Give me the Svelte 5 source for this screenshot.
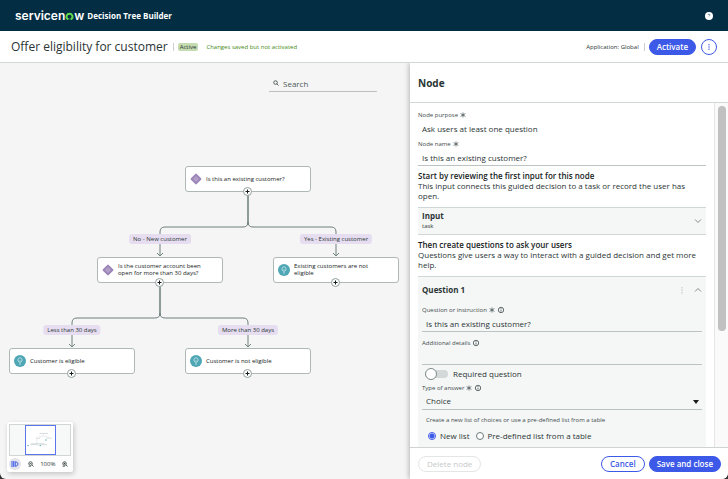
<script>
  let nodeName = $state('Is this an existing customer?');
  let question = $state('Is this an existing customer?');
  let details = $state('');
  let required = $state(false);
  let answerType = $state('Choice');
  let listSource = $state('new');
  let search = $state('');

  const nodes = [
    { x: 185, y: 103, kind: 'question', text: 'Is this an existing customer?' },
    { x: 97, y: 194, kind: 'question', text: 'Is the customer account been open for more than 30 days?' },
    { x: 273, y: 194, kind: 'result', text: 'Existing customers are not eligible' },
    { x: 9, y: 285, kind: 'result', text: 'Customer is eligible' },
    { x: 185, y: 285, kind: 'result', text: 'Customer is not eligible' }
  ];

  const branches = [
    { x: 160, y: 176, text: 'No - New customer' },
    { x: 336, y: 176, text: 'Yes - Existing customer' },
    { x: 72, y: 267, text: 'Less than 30 days' },
    { x: 248, y: 267, text: 'More than 30 days' }
  ];

  const forks = [
    { x: 248, y: 129 },
    { x: 160, y: 220 }
  ];
</script>

{#snippet star()}
  <svg class="star" viewBox="0 0 6 6" aria-hidden="true">
    <path d="M3 .5v5M.6 1.6l4.8 2.8M.6 4.4l4.8-2.8" />
  </svg>
{/snippet}

{#snippet info()}
  <svg class="info" viewBox="0 0 8 8" aria-hidden="true">
    <circle cx="4" cy="4" r="2.7" />
    <path d="M4 3.6v2M4 2.2v.8" />
  </svg>
{/snippet}

{#snippet magnifier(sign)}
  <svg class="magnifier" viewBox="0 0 8 8" aria-hidden="true">
    <circle cx="3.4" cy="3.4" r="2.4" />
    <path d="M5.2 5.2l2.2 2.2" />
    {#if sign}<path d="M2.2 3.4h2.4M.8 7h3" />{/if}
    {#if sign === '+'}<path d="M3.4 2.2v2.4" />{/if}
  </svg>
{/snippet}

<div class="app">
  <header class="topbar">
    <span class="logo">servicen<svg viewBox="0 0 16 16" aria-label="o"><path d="M8 1.5a7 7 0 0 0-5 12c.7.8 1.6.8 2.4.2 1.6-1.1 3.6-1.1 5.2 0 .8.6 1.7.6 2.4-.2a7 7 0 0 0-5-12zm0 10.6a3.6 3.6 0 1 1 0-7.2 3.6 3.6 0 0 1 0 7.2z" /></svg>w</span>
    <span class="product">Decision Tree Builder</span>
    <button class="help" aria-label="Help">
      <svg viewBox="0 0 8 8"><circle cx="4" cy="4" r="4" /><path d="M3 3c0-1.2 2-1.2 2 0 0 .7-1 .7-1 1.4" /></svg>
    </button>
  </header>

  <div class="titlebar">
    <h1>Offer eligibility for customer</h1>
    <span class="rule"></span>
    <span class="badge">Active</span>
    <span class="saved">Changes saved but not activated</span>
    <span class="scope">Application: Global</span>
    <span class="rule"></span>
    <button class="pill primary">Activate</button>
    <button class="more" aria-label="More actions">
      <svg viewBox="0 0 6 10"><path d="M3 2v1.5M3 4.25v1.5M3 6.5v1.5" /></svg>
    </button>
  </div>

  <div class="workspace">
    <main class="canvas">
      <label class="search">
        {@render magnifier()}
        <input type="text" placeholder="Search" aria-label="Search" bind:value={search} />
      </label>

      <svg class="links" width="410" height="320" aria-hidden="true">
        {#each forks as { x, y }}
          <path class="trunk" d="M{x} {y}v33" />
          <path d="M{x} {y + 30}q0 5-5 5H{x - 83}q-5 0-5 5v24M{x} {y + 30}q0 5 5 5H{x + 83}q5 0 5 5v24" />
          <path d="M{x - 91} {y + 61}l3 3 3-3M{x + 85} {y + 61}l3 3 3-3" />
        {/each}
      </svg>

      {#each branches as branch}
        <span class="branch" style="left: {branch.x}px; top: {branch.y}px">{branch.text}</span>
      {/each}

      {#each nodes as node}
        <div class="node" style="left: {node.x}px; top: {node.y}px">
          {#if node.kind === 'question'}
            <svg viewBox="0 0 12 12" aria-hidden="true">
              <rect x="1.9" y="1.9" width="8.2" height="8.2" rx="1" transform="rotate(45 6 6)" fill="#9c86b8" />
              <path d="M6 3.6v1.2M6 7.2v1.2M3.6 6h1.2M7.2 6h1.2M4.8 4.8l.5.5M6.7 6.7l.5.5M7.2 4.8l-.5.5M5.3 6.7l-.5.5" stroke="#e6dcf0" stroke-width=".8" />
            </svg>
          {:else}
            <svg viewBox="0 0 12 12" aria-hidden="true">
              <circle cx="6" cy="6" r="6" fill="#4fa6b5" />
              <path d="M5.2 7.2C3.3 6 3.8 2.8 6 2.8s2.7 3.2.8 4.4M6 5.4v4.4" stroke="#d5f0f3" stroke-width=".8" />
            </svg>
          {/if}
          <span>{node.text}</span>
          <button class="add" aria-label="Add after {node.text}">
            <svg viewBox="0 0 9 9"><path d="M4.5 2.5v4M2.5 4.5h4" /></svg>
          </button>
        </div>
      {/each}

      <div class="minimap">
        <div class="overview">
          <svg viewBox="0 0 30 30" aria-label="Tree overview">
            <path d="M14 8h9M10 13h5M21 13h6M5 19h14M4 20h9M15 20h7" stroke="#d3d8d8" />
            <path d="M18 8v3M11 13v6M13 11h11" stroke="#d5d9d9" stroke-width=".5" />
            <path d="M20 15h1.5M1 21h1.5M14 21h1.5" stroke="#3fa5ab" />
          </svg>
        </div>
        <div class="zoom">
          <button class="toggle" aria-label="Toggle overview">
            <svg viewBox="0 0 8 8"><path d="M1 1v6M2.7 1v6M4.2 1.5v5M4.2 2h1.5l1.5 2-1.5 2H4.2" /></svg>
          </button>
          <button aria-label="Zoom out">{@render magnifier('-')}</button>
          <span>100%</span>
          <button aria-label="Zoom in">{@render magnifier('+')}</button>
        </div>
      </div>
    </main>

    <aside class="panel">
      <h2>Node</h2>

      <div class="scroll">
        <div class="form">
          <div class="label">Node purpose {@render star()}</div>
          <div class="value">Ask users at least one question</div>

          <label class="label" for="node-name">Node name {@render star()}</label>
          <input class="field" id="node-name" type="text" bind:value={nodeName} />

          <div class="intro">
            <h3>Start by reviewing the first input for this node</h3>
            <p>This input connects this guided decision to a task or record the user has open.</p>
          </div>

          <button class="card input-card">
            <span><b>Input</b><small>task</small></span>
            <svg class="chevron" viewBox="0 0 8 8"><path d="M1 2.5l3 3 3-3" /></svg>
          </button>

          <div class="intro">
            <h3>Then create questions to ask your users</h3>
            <p>Questions give users a way to interact with a guided decision and get more help.</p>
          </div>

          <section class="card question">
            <div class="question-head">
              <b>Question 1</b>
              <button aria-label="Question actions">
                <svg class="dots" viewBox="0 0 8 8"><path d="M4 1v1.5M4 3.5v1.5M4 6v1.5" /></svg>
              </button>
              <button aria-label="Collapse question">
                <svg class="chevron" viewBox="0 0 8 8"><path d="M1 5.5l3-3 3 3" /></svg>
              </button>
            </div>

            <label class="label" for="question">Question or instruction {@render star()} {@render info()}</label>
            <input class="field" id="question" type="text" bind:value={question} />

            <label class="label details" for="details">Additional details {@render info()}</label>
            <input class="field" id="details" type="text" bind:value={details} />

            <label class="switch">
              <input type="checkbox" role="switch" bind:checked={required} />
              Required question
            </label>

            <label class="label" for="answer">Type of answer {@render star()} {@render info()}</label>
            <div class="select">
              <select class="field" id="answer" bind:value={answerType}>
                <option>Choice</option>
                <option>Text</option>
              </select>
            </div>

            <fieldset>
              <legend>Create a new list of choices or use a pre-defined list from a table</legend>
              <label><input type="radio" value="new" bind:group={listSource} />New list</label>
              <label><input type="radio" value="table" bind:group={listSource} />Pre-defined list from a table</label>
            </fieldset>
          </section>
        </div>
        <div class="track"><div class="thumb"></div></div>
      </div>

      <footer>
        <button class="pill" disabled>Delete node</button>
        <button class="pill secondary">Cancel</button>
        <button class="pill primary">Save and close</button>
      </footer>
    </aside>
  </div>
</div>

<style>
  :global(body) {
    background: #333;
  }

  .app {
    display: flex;
    flex-direction: column;
    height: 100vh;
    overflow: hidden;
    border-radius: 0 0 6px 6px;
    background: #f5f5f5;
    color: #2b3535;
    font: 8px/10px "Open Sans", "Noto Sans", sans-serif;
  }

  .app *,
  .app *::before {
    box-sizing: border-box;
  }

  h1, h2, h3, p {
    margin: 0;
  }

  button, input, select {
    margin: 0;
    padding: 0;
    border: 0;
    background: none;
    color: inherit;
    font: inherit;
  }

  svg {
    display: block;
    flex: none;
    fill: none;
  }

  .topbar {
    display: flex;
    flex: none;
    align-items: center;
    height: 31px;
    padding: 0 15px;
    background: #032d42;
    color: #fff;
  }

  .logo {
    display: flex;
    align-items: center;
    margin-right: 3px;
    font: 600 12px/16px Inter, sans-serif;

    svg {
      width: 9px;
      height: 9px;
      margin-top: 2px;
      fill: #62d84e;
    }
  }

  .product {
    font-weight: 700;
  }

  .help {
    margin-left: auto;

    svg {
      width: 8px;
      height: 8px;
      fill: #fff;
    }

    path {
      fill: none;
      stroke: #032d42;
      stroke-width: .5;
    }
  }

  .titlebar {
    display: flex;
    flex: none;
    align-items: center;
    height: 32px;
    padding: 0 11px;
    border-bottom: 1px solid #cfd8d6;
    background: #fff;
    font-size: 6px;

    h1 {
      font-size: 12px;
      font-weight: 400;
    }
  }

  .rule {
    width: 1px;
    height: 8px;
    margin: 0 4px 0 5px;
    background: #cbd1d1;
  }

  .badge {
    padding: 0 2px;
    border-radius: 2px;
    background: #c5dbb0;
    line-height: 8px;
  }

  .saved {
    margin-left: 8px;
    color: #458a13;
  }

  .scope {
    margin-left: auto;
  }

  .pill {
    height: 16px;
    padding: 0 8px;
    border: 1px solid #e4e6e6;
    border-radius: 8px;
    background: #fff;
    font-size: 8px;
    font-weight: 600;
    line-height: 12px;

    &:disabled {
      margin-right: auto;
      color: #c6c9c9;
      font-weight: 400;
    }

    &.primary {
      padding: 0 7px;
      border-color: #3c59e7;
      background: #3c59e7;
      color: #fff;
    }

    &.secondary {
      border-color: #3c59e7;
      color: #3c59e7;
    }
  }

  .more {
    width: 16px;
    height: 16px;
    margin-left: 5px;
    border: 1px solid #3c59e7;
    border-radius: 50%;

    svg {
      width: 6px;
      height: 10px;
      margin: auto;
      stroke: #3c59e7;
    }
  }

  .workspace {
    display: grid;
    flex: 1;
    grid-template-columns: minmax(0, 1fr) 318px;
    min-height: 0;
  }

  .canvas {
    position: relative;
    overflow: hidden;
  }

  .search {
    display: flex;
    align-items: center;
    gap: 4px;
    width: 108px;
    margin: 13px 33px 0 auto;
    padding: 0 4px 1px;
    border-bottom: 1px solid #bcc0c0;

    input {
      width: 80px;
      height: 14px;
      outline: none;
    }

    input::placeholder {
      color: #4d5959;
    }
  }

  .magnifier {
    width: 6px;
    height: 6px;
    stroke: #2b3535;
  }

  .links {
    position: absolute;
    inset: 0 auto auto 0;
    stroke: #70807e;

    .trunk {
      stroke: #8e9b99;
      stroke-width: 2;
    }
  }

  .branch {
    position: absolute;
    transform: translate(-50%, -50%);
    padding: 0 4px;
    border-radius: 3px;
    background: #e6def0;
    font-size: 6px;
    white-space: nowrap;
  }

  .node {
    position: absolute;
    display: flex;
    align-items: center;
    gap: 4px;
    width: 126px;
    height: 26px;
    padding: 0 4px;
    border: 1px solid #aeb9b7;
    border-radius: 3px;
    background: #fff;
    color: #161b1c;
    font-size: 6px;
    line-height: 7px;

    > svg {
      width: 12px;
      height: 12px;
    }

    span {
      max-width: 90px;
    }
  }

  .add {
    position: absolute;
    bottom: -5px;
    left: 50%;
    width: 9px;
    height: 9px;
    margin-left: -5px;
    border: 1px solid #92a09e;
    border-radius: 50%;
    background: #fff;

    svg {
      width: 9px;
      height: 9px;
      margin: -1px;
      stroke: #161b1c;
    }
  }

  .minimap {
    position: absolute;
    bottom: 7px;
    left: 7px;
    width: 66px;
    padding: 2px;
    border-radius: 2px;
    background: #fff;
    box-shadow: 1px 2px 5px #0003;
  }

  .overview {
    height: 32px;
    border: 1px solid #d0d6d6;
    background: #f7f8f8;

    svg {
      width: 31px;
      height: 30px;
      margin: 0 auto;
      border: 1px solid #5c74ee;
      background: #fff;
    }
  }

  .zoom {
    display: flex;
    align-items: center;
    justify-content: space-between;
    padding: 2px 3px 0 0;
    font-size: 6px;

    .toggle {
      padding: 2px;
      border-radius: 50%;
      background: #e2e4ea;
    }

    .toggle svg {
      width: 8px;
      height: 8px;
      stroke: #3c59e7;
    }
  }

  .panel {
    z-index: 1;
    display: flex;
    flex-direction: column;
    min-height: 0;
    background: #fff;
    box-shadow: -1px 0 5px #0004;
    clip-path: inset(0 0 0 -8px);

    h2 {
      padding: 13px 8px 12px;
      border-bottom: 1px solid #cfd8d6;
      font-size: 10px;
      line-height: 14px;
    }

    footer {
      display: flex;
      flex: none;
      align-items: center;
      gap: 4px;
      height: 32px;
      padding: 0 7px 0 8px;
      border-top: 1px solid #cfd3d3;
    }
  }

  .scroll {
    display: flex;
    flex: 1;
    min-height: 0;
    overflow: hidden;
  }

  .form {
    flex: 1;
    padding: 7px 8px 0;
  }

  .track {
    flex: none;
    width: 14px;
    padding: 3px 2px 0 3px;
    border-left: 1px solid #e6e6e6;
    background: #fafafa;
  }

  .thumb {
    height: 66%;
    border-radius: 4px;
    background: #c1c1c1;
  }

  .label {
    display: flex;
    align-items: center;
    gap: 2px;
    height: 10px;
    color: #3f4b4b;
    font-size: 6px;
  }

  .star {
    width: 6px;
    height: 6px;
    stroke: #3f4b4b;
    stroke-width: .7;
  }

  .info {
    width: 8px;
    height: 8px;
    stroke: #3f4b4b;
    stroke-width: .8;
  }

  .value {
    height: 19px;
    padding: 4px;
  }

  .field {
    display: block;
    width: 100%;
    height: 17px;
    padding: 0 4px;
    border-bottom: 1px solid #bcc3c3;
    outline: none;
  }

  .intro {
    padding: 5px 0 6px;

    h3 {
      color: #161b1c;
      font-size: 8px;
      font-weight: 600;
    }
  }

  .card {
    border-top: 1px solid #cfd8d6;
    background: #f5f7f7;
  }

  .input-card {
    display: flex;
    align-items: center;
    justify-content: space-between;
    width: 100%;
    height: 28px;
    padding: 0 4px;
    border-bottom: 1px solid #cfd8d6;
    text-align: left;

    b, small {
      display: block;
    }

    small {
      font-size: 6px;
    }
  }

  .chevron {
    width: 8px;
    height: 8px;
    stroke: #66716f;
    stroke-width: .8;
  }

  .question {
    padding: 0 4px;
  }

  .question-head {
    display: flex;
    align-items: center;
    gap: 8px;
    height: 25px;
    margin-bottom: 3px;

    b {
      margin-right: auto;
    }
  }

  .dots {
    width: 8px;
    height: 8px;
    stroke: #b9bfbf;
  }

  .details {
    margin-top: 6px;
  }

  .switch {
    display: flex;
    align-items: center;
    gap: 5px;
    height: 18px;

    input {
      display: flex;
      align-items: center;
      width: 23px;
      height: 8px;
      margin-left: 3px;
      border-radius: 4px;
      background: #d3d8d8;
      appearance: none;
    }

    input::before {
      width: 12px;
      height: 12px;
      border: 1px solid #7d8a88;
      border-radius: 50%;
      background: #fff;
      content: "";
    }

    input:checked {
      justify-content: flex-end;
      background: #3c59e7;
    }
  }

  .select {
    display: grid;
    align-items: center;

    select {
      grid-area: 1 / 1;
      appearance: none;
    }

    &::after {
      grid-area: 1 / 1;
      justify-self: end;
      margin-right: 3px;
      border: 3px solid transparent;
      border-top: 4px solid #161b1c;
      border-bottom: 0;
      content: "";
      pointer-events: none;
    }
  }

  fieldset {
    display: flex;
    gap: 4px;
    margin: 0;
    padding: 6px 4px 8px;
    border: 0;

    legend {
      padding: 5px 0 0;
      color: #3f4b4b;
      font-size: 6px;
    }

    label {
      display: flex;
      align-items: center;
      gap: 4px;
    }

    input {
      width: 8px;
      height: 8px;
      margin-left: 2px;
      border: 1px solid #6f7b7a;
      border-radius: 50%;
      background: #fff;
      appearance: none;
    }

    input:checked {
      border-color: #3c59e7;
      background: radial-gradient(#3c59e7 2px, #fff 3px);
    }
  }
</style>
